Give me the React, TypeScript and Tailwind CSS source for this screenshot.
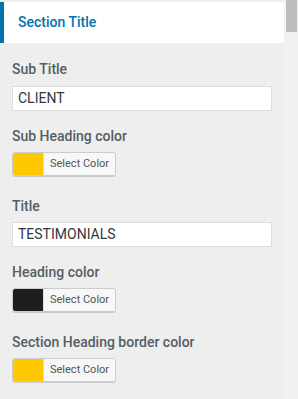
import React from "react";

const Label = ({ children, mb = "mb-[6px]" }: { children: React.ReactNode; mb?: string }) => (
  <div className={`text-[14px] leading-[20px] font-medium text-[#555d66] ${mb}`}>{children}</div>
);

const TextInput = ({ value }: { value: string }) => (
  <div className="h-[25px] w-[260px] border border-[#dddddd] bg-white pl-[5px] flex items-center text-[14px] text-[#32373c]">
    {value}
  </div>
);

const ColorButton = ({ color }: { color: string }) => (
  <div className="h-[24px] w-[104px] flex rounded-[3px] border border-[#cccccc] shadow-[0_1px_0_#cccccc] overflow-hidden">
    <div className="w-[30px] h-full" style={{ background: color }} />
    <div className="flex-1 bg-[#f7f7f7] border-l border-[#dddddd] pl-[6px] flex items-center text-[11px] text-[#555555]">
      Select Color
    </div>
  </div>
);

export default function App() {
  return (
    <div
      className="w-[298px] h-[399px] bg-[#eeeeee] flex overflow-hidden"
      style={{ fontFamily: "Roboto, 'Noto Sans', sans-serif" }}
    >
      <div className="w-[284px] pt-[2px]">
        <div className="h-[41px] bg-white border-l-4 border-[#0073aa] pl-[14px] flex items-center text-[14px] font-medium text-[#0073aa]">
          Section Title
        </div>
        <div className="px-[12px] pt-[16px] flex flex-col">
          <Label mb="mb-[7px]">Sub Title</Label>
          <TextInput value="CLIENT" />
          <div className="mt-[15px]">
            <Label>Sub Heading color</Label>
            <ColorButton color="#fec800" />
          </div>
          <div className="mt-[20px]">
            <Label>Title</Label>
            <TextInput value="TESTIMONIALS" />
          </div>
          <div className="mt-[15px]">
            <Label>Heading color</Label>
            <ColorButton color="#1e1e1e" />
          </div>
          <div className="mt-[20px]">
            <Label>Section Heading border color</Label>
            <ColorButton color="#fec800" />
          </div>
        </div>
      </div>
      <div className="w-[14px] h-full bg-[#f1f1f1]">
        <div className="ml-[2px] w-[11px] h-[32px] bg-[#bdbdbd]" />
      </div>
    </div>
  );
}
